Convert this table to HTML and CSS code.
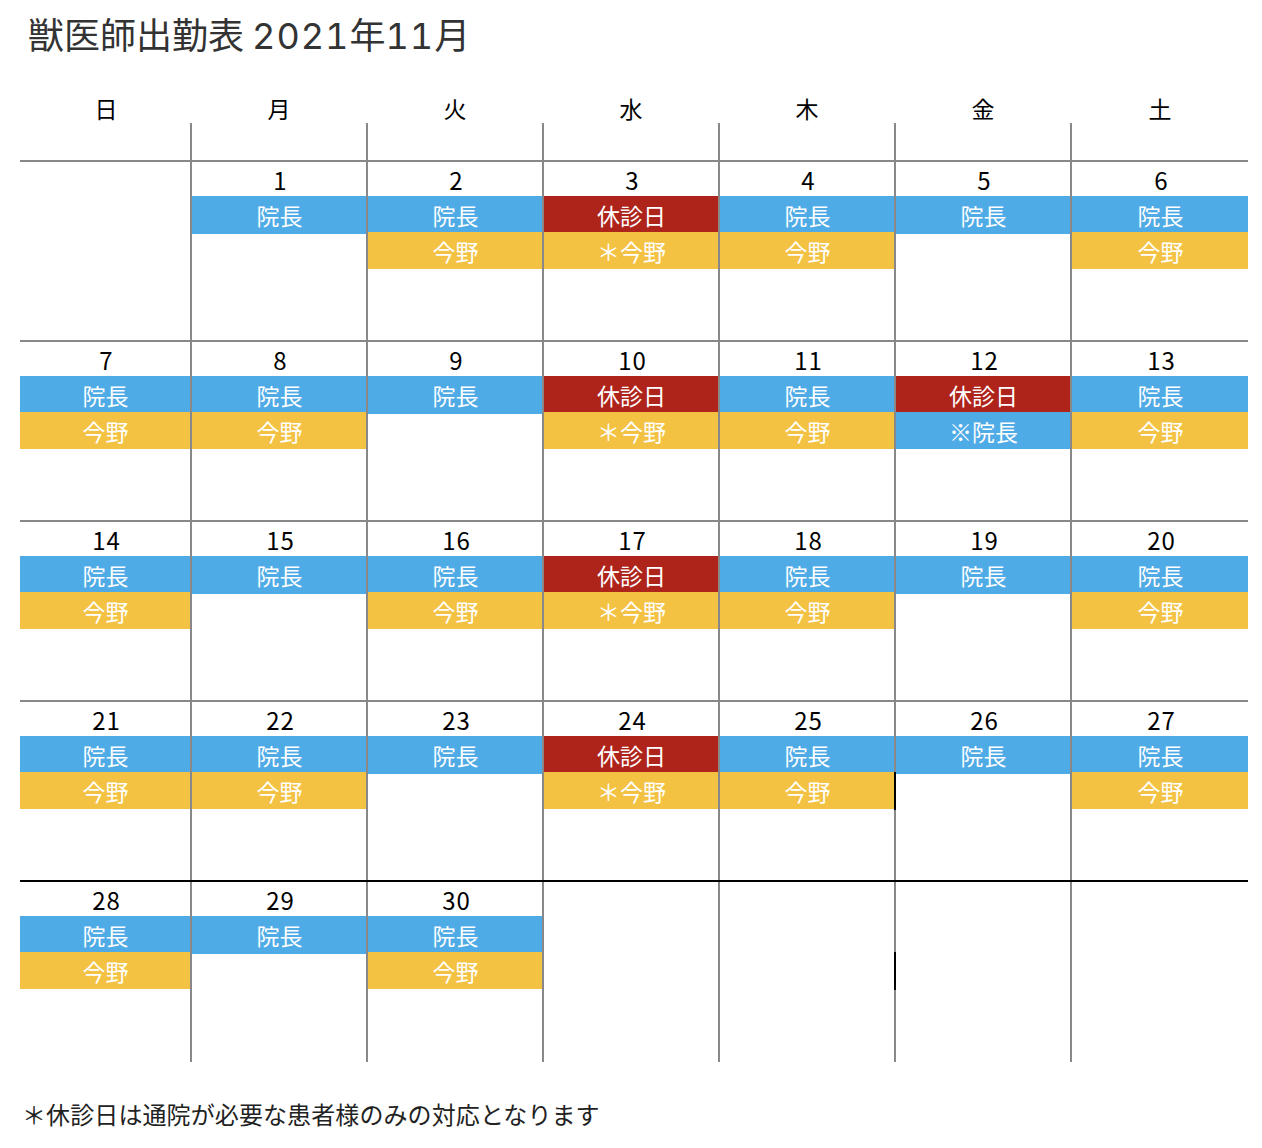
FILE: index.html
```html
<!DOCTYPE html>
<html lang="ja">
<head>
<meta charset="utf-8">
<title>獣医師出勤表 2021年11月</title>
<link rel="stylesheet" href="styles.css">
</head>
<body>
<h1 class="title">獣医師出勤表 <span class="digits">2021</span>年<span class="digits">11</span>月</h1>

<div class="calendar">
  <div class="head">
    <div class="hcell"><div class="dn">日</div><div class="sp"></div></div>
    <div class="hcell"><div class="dn">月</div><div class="sp"></div></div>
    <div class="hcell"><div class="dn">火</div><div class="sp"></div></div>
    <div class="hcell"><div class="dn">水</div><div class="sp"></div></div>
    <div class="hcell"><div class="dn">木</div><div class="sp"></div></div>
    <div class="hcell"><div class="dn">金</div><div class="sp"></div></div>
    <div class="hcell"><div class="dn">土</div><div class="sp"></div></div>
  </div>

  <div class="week">
    <div class="day"></div>
    <div class="day"><div class="num">1</div><div class="bar blue solo">院長</div></div>
    <div class="day"><div class="num">2</div><div class="bar blue">院長</div><div class="bar orange">今野</div></div>
    <div class="day"><div class="num">3</div><div class="bar red">休診日</div><div class="bar orange">＊今野</div></div>
    <div class="day"><div class="num">4</div><div class="bar blue">院長</div><div class="bar orange">今野</div></div>
    <div class="day"><div class="num">5</div><div class="bar blue solo">院長</div></div>
    <div class="day"><div class="num">6</div><div class="bar blue">院長</div><div class="bar orange">今野</div></div>
  </div>

  <div class="week">
    <div class="day"><div class="num">7</div><div class="bar blue">院長</div><div class="bar orange">今野</div></div>
    <div class="day"><div class="num">8</div><div class="bar blue">院長</div><div class="bar orange">今野</div></div>
    <div class="day"><div class="num">9</div><div class="bar blue solo">院長</div></div>
    <div class="day"><div class="num">10</div><div class="bar red">休診日</div><div class="bar orange">＊今野</div></div>
    <div class="day"><div class="num">11</div><div class="bar blue">院長</div><div class="bar orange">今野</div></div>
    <div class="day"><div class="num">12</div><div class="bar red">休診日</div><div class="bar blue">※院長</div></div>
    <div class="day"><div class="num">13</div><div class="bar blue">院長</div><div class="bar orange">今野</div></div>
  </div>

  <div class="week">
    <div class="day"><div class="num">14</div><div class="bar blue">院長</div><div class="bar orange">今野</div></div>
    <div class="day"><div class="num">15</div><div class="bar blue solo">院長</div></div>
    <div class="day"><div class="num">16</div><div class="bar blue">院長</div><div class="bar orange">今野</div></div>
    <div class="day"><div class="num">17</div><div class="bar red">休診日</div><div class="bar orange">＊今野</div></div>
    <div class="day"><div class="num">18</div><div class="bar blue">院長</div><div class="bar orange">今野</div></div>
    <div class="day"><div class="num">19</div><div class="bar blue solo">院長</div></div>
    <div class="day"><div class="num">20</div><div class="bar blue">院長</div><div class="bar orange">今野</div></div>
  </div>

  <div class="week">
    <div class="day"><div class="num">21</div><div class="bar blue">院長</div><div class="bar orange">今野</div></div>
    <div class="day"><div class="num">22</div><div class="bar blue">院長</div><div class="bar orange">今野</div></div>
    <div class="day"><div class="num">23</div><div class="bar blue solo">院長</div></div>
    <div class="day"><div class="num">24</div><div class="bar red">休診日</div><div class="bar orange">＊今野</div></div>
    <div class="day"><div class="num">25</div><div class="bar blue">院長</div><div class="bar orange">今野</div></div>
    <div class="day"><span class="mark"></span><div class="num">26</div><div class="bar blue solo">院長</div></div>
    <div class="day"><div class="num">27</div><div class="bar blue">院長</div><div class="bar orange">今野</div></div>
  </div>

  <div class="week last">
    <div class="day"><div class="num">28</div><div class="bar blue">院長</div><div class="bar orange">今野</div></div>
    <div class="day"><div class="num">29</div><div class="bar blue solo">院長</div></div>
    <div class="day"><div class="num">30</div><div class="bar blue">院長</div><div class="bar orange">今野</div></div>
    <div class="day"></div>
    <div class="day"></div>
    <div class="day"><span class="mark"></span></div>
    <div class="day"></div>
  </div>
</div>

<p class="note">＊休診日は通院が必要な患者様のみの対応となります</p>
</body>
</html>
```

FILE: styles.css
```css
* {
  box-sizing: border-box;
}

body {
  margin: 0;
  padding: 12px 0 0 20px;
  background: #ffffff;
  font-family: "Noto Sans CJK JP", "Noto Sans", sans-serif;
  color: #000000;
}

.title {
  margin: 0 0 0 8px;
  height: 43px;
  font-size: 36px;
  line-height: 43px;
  font-weight: 400;
  color: #333333;
}

.title .digits {
  font-family: Inter, "Noto Sans CJK JP", sans-serif;
  font-variant-numeric: tabular-nums;
  font-weight: 400;
  letter-spacing: 1px;
  line-height: 1;
}

.calendar {
  margin-top: 39px;
  width: 1228px;
}

.head,
.week {
  display: grid;
  grid-template-columns: 170px repeat(5, 176px) 178px;
}

.dn {
  height: 29px;
  padding-left: 2px;
  line-height: 29px;
  font-size: 23px;
  text-align: center;
}

.sp {
  height: 37px;
}

.hcell + .hcell .sp {
  border-left: 2px solid #888888;
}

.week {
  border-top: 2px solid #888888;
}

.week.last {
  border-top-color: #000000;
}

.day {
  position: relative;
  height: 178px;
}

.week.last .day {
  height: 180px;
}

.day + .day {
  border-left: 2px solid #888888;
}

.num {
  height: 34px;
  padding-left: 3px;
  line-height: 36px;
  font-size: 24px;
  text-align: center;
  letter-spacing: 1px;
}

.bar {
  height: 36px;
  padding-left: 1px;
  line-height: 38px;
  font-size: 23px;
  text-align: center;
  color: #ffffff;
}

.bar + .bar {
  height: 37px;
}

.bar.solo {
  height: 38px;
}

.blue {
  background: #4fabe6;
}

.orange {
  background: #f4c243;
}

.red {
  background: #ae231a;
}

.mark {
  position: absolute;
  left: -2px;
  top: 70px;
  width: 2px;
  height: 38px;
  background: #000000;
}

.note {
  margin: 37px 0 0 2px;
  font-size: 24px;
  letter-spacing: 0.1px;
  line-height: 30px;
  color: #222222;
}
```
